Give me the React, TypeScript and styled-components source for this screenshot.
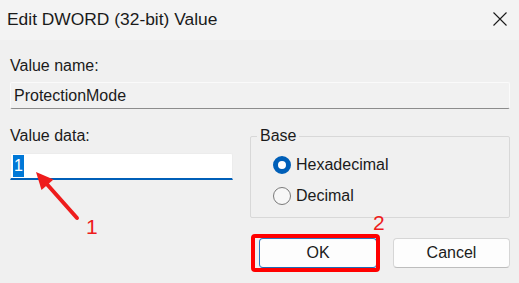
import React from "react";
import styled, { createGlobalStyle } from "styled-components";

const GlobalStyle = createGlobalStyle`
    html, body {
        margin: 0;
        padding: 0;
        background: #f0f0f0;
    }

    body {
        font-family: "Liberation Sans", Arial, sans-serif;
        color: #1b1b1b;
    }
`;

const Frame = styled.div`
    position: relative;
    width: 519px;
    height: 283px;
    overflow: hidden;
    background: #f0f0f0;
`;

const TitleBar = styled.div`
    display: flex;
    align-items: center;
    justify-content: space-between;
    height: 40px;
    padding: 0 12px 2px 7px;
    box-sizing: border-box;
    background: #f3f3f3;
`;

const Title = styled.span`
    font-size: 17.4px;
    line-height: 20px;
    color: #1a1a1a;
`;

const CloseButton = styled.div`
    display: flex;
    width: 14px;
    height: 14px;
`;

const Body = styled.div`
    padding: 0 9px 0 10px;
`;

const Label = styled.div<{ $top?: number }>`
    margin-top: ${(p) => p.$top ?? 0}px;
    font-size: 16px;
    line-height: 18px;
`;

const ReadOnlyField = styled.div`
    box-sizing: border-box;
    height: 27px;
    margin-top: 7px;
    padding: 4px 3px 0;
    font-size: 16px;
    line-height: 18px;
    background: #f1f1f1;
    border: 1px solid #fafafa;
    border-bottom-color: #8c8c8c;
    border-radius: 2px;
`;

const DataRow = styled.div`
    display: flex;
    gap: 17px;
    margin-top: 18px;
`;

const DataColumn = styled.div`
    display: flex;
    flex-direction: column;
    width: 223px;
`;

const TextInput = styled.div`
    box-sizing: border-box;
    height: 27px;
    margin-top: 8px;
    padding: 1px 2px 0;
    background: #ffffff;
    border: 1px solid #ececec;
    border-bottom: 2px solid #005fb8;
    border-radius: 2px 2px 0 0;
`;

const Selected = styled.span`
    display: inline-block;
    height: 22px;
    padding: 0 1px;
    font-size: 16px;
    line-height: 22px;
    color: #ffffff;
    background: #0078d7;
`;

const GroupBox = styled.fieldset`
    box-sizing: border-box;
    width: 260px;
    margin: 0;
    padding: 4px 10px 6px 22px;
    border: 1px solid #d8d8d8;
    border-radius: 2px;
    min-inline-size: 0;
`;

const Legend = styled.legend`
    margin-left: -16px;
    padding: 0 3px;
    font-size: 16px;
    line-height: 18px;
`;

const RadioRow = styled.label`
    display: flex;
    align-items: center;
    gap: 5px;
    height: 31px;
    font-size: 16px;
    line-height: 18px;
`;

const RadioDot = styled.span<{ $checked?: boolean }>`
    box-sizing: border-box;
    width: 18px;
    height: 18px;
    border-radius: 50%;
    flex: none;
    background: ${(p) => (p.$checked ? "#ffffff" : "#f7f7f7")};
    border: ${(p) => (p.$checked ? "5.5px solid #005fb8" : "1px solid #7a7a7a")};
`;

const ButtonRow = styled.div`
    display: flex;
    justify-content: flex-end;
    gap: 16px;
    margin-top: 20px;
`;

const Button = styled.div<{ $width: number; $primary?: boolean }>`
    box-sizing: border-box;
    display: flex;
    align-items: center;
    justify-content: center;
    width: ${(p) => p.$width}px;
    height: 30px;
    font-size: 16px;
    background: #fdfdfd;
    border: 1px solid ${(p) => (p.$primary ? "#2b79c2" : "#d6d6d6")};
    border-bottom-color: ${(p) => (p.$primary ? "#1f6cb5" : "#bdbdbd")};
    border-radius: 4px;
`;

const Annotations = styled.svg`
    position: absolute;
    left: 0;
    top: 0;
    pointer-events: none;
`;

const Callout = styled.span<{ $x: number; $y: number }>`
    position: absolute;
    left: ${(p) => p.$x}px;
    top: ${(p) => p.$y}px;
    font-size: 21px;
    line-height: 21px;
    color: #ee1c1c;
`;

const App = (): JSX.Element => (
    <>
        <GlobalStyle />
        <Frame>
            <TitleBar>
                <Title>Edit DWORD (32-bit) Value</Title>
                <CloseButton>
                    <svg width="14" height="14" viewBox="0 0 14 14">
                        <path d="M0.5 0.5 L13.5 13.5 M13.5 0.5 L0.5 13.5" stroke="#1a1a1a" strokeWidth="1.1" />
                    </svg>
                </CloseButton>
            </TitleBar>
            <Body>
                <Label $top={17}>Value name:</Label>
                <ReadOnlyField>ProtectionMode</ReadOnlyField>
                <DataRow>
                    <DataColumn>
                        <Label>Value data:</Label>
                        <TextInput>
                            <Selected>1</Selected>
                        </TextInput>
                    </DataColumn>
                    <GroupBox>
                        <Legend>Base</Legend>
                        <RadioRow>
                            <RadioDot $checked />
                            Hexadecimal
                        </RadioRow>
                        <RadioRow>
                            <RadioDot />
                            Decimal
                        </RadioRow>
                    </GroupBox>
                </DataRow>
                <ButtonRow>
                    <Button $width={118} $primary>OK</Button>
                    <Button $width={117}>Cancel</Button>
                </ButtonRow>
            </Body>

            {/* screenshot annotations */}
            <Annotations width="519" height="283" viewBox="0 0 519 283">
                <line x1="77" y1="218" x2="45" y2="182" stroke="#ee1c1c" strokeWidth="4" strokeLinecap="round" />
                <polygon points="36,172 53.5,179.5 41.5,190" fill="#ee1c1c" />
                <rect x="253" y="236" width="125" height="34" rx="2" fill="none" stroke="#ff0000" strokeWidth="4" />
            </Annotations>
            <Callout $x={86} $y={216}>1</Callout>
            <Callout $x={373} $y={212}>2</Callout>
        </Frame>
    </>
);

export default App;
